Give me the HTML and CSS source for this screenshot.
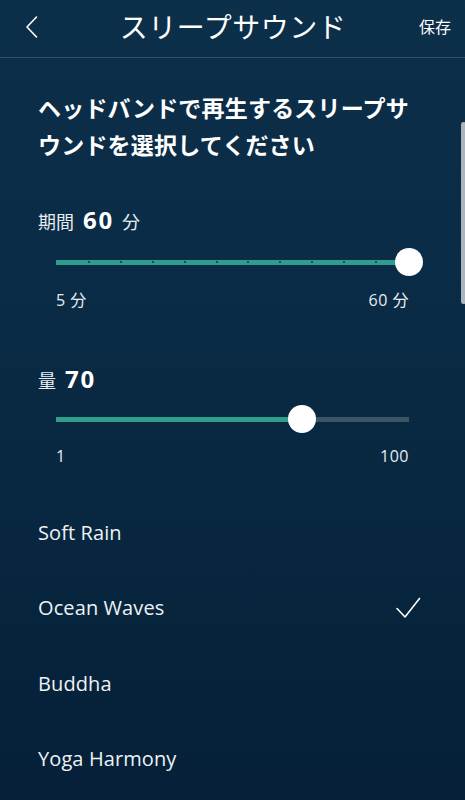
FILE: index.html
```html
<!DOCTYPE html>
<html lang="ja">
<head>
<meta charset="utf-8">
<title>スリープサウンド</title>
<link rel="stylesheet" href="styles.css">
</head>
<body>
<div class="screen">
  <header class="topbar">
    <span class="back">
      <svg width="14" height="24" viewBox="0 0 14 24"><path d="M11.5 2 L2 12 L11.5 22" fill="none" stroke="#ffffff" stroke-width="1.6" stroke-linecap="round" stroke-linejoin="round"/></svg>
    </span>
    <h1 class="title">スリープサウンド</h1>
    <span class="save">保存</span>
  </header>

  <main class="content">
    <p class="lead">ヘッドバンドで再生するスリープサウンドを選択してください</p>

    <section class="setting duration">
      <div class="label"><span class="jp">期間</span><b class="num">60</b><span class="jp unit">分</span></div>
      <div class="slider">
        <div class="track"><div class="fill" style="width:100%"></div>
          <div class="ticks"><i></i><i></i><i></i><i></i><i></i><i></i><i></i><i></i><i></i><i></i><i></i><i></i></div>
        </div>
        <div class="thumb" style="left:100%"></div>
      </div>
      <div class="range"><span>5 分</span><span>60 分</span></div>
    </section>

    <section class="setting volume">
      <div class="label"><span class="jp">量</span><b class="num">70</b></div>
      <div class="slider">
        <div class="track"><div class="fill" style="width:69.7%"></div></div>
        <div class="thumb" style="left:69.7%"></div>
      </div>
      <div class="range"><span>1</span><span>100</span></div>
    </section>

    <ul class="sounds">
      <li>Soft Rain</li>
      <li class="selected">Ocean Waves
        <svg class="check" width="26" height="24" viewBox="0 0 26 24"><path d="M2 12.5 L10 21 L24.5 2.5" fill="none" stroke="#ffffff" stroke-width="1.6" stroke-linecap="round" stroke-linejoin="round"/></svg>
      </li>
      <li>Buddha</li>
      <li>Yoga Harmony</li>
    </ul>
  </main>

  <div class="scrollbar"></div>
</div>
</body>
</html>
```
FILE: styles.css
```css
* { box-sizing: border-box; }
html, body { margin: 0; padding: 0; }
body {
  width: 465px;
  height: 800px;
  overflow: hidden;
  background: #06213a;
  font-family: "Open Sans", "Noto Sans CJK JP", sans-serif;
  color: #ffffff;
}
.screen {
  position: relative;
  width: 465px;
  height: 800px;
  background: linear-gradient(180deg, #0c2f4a 0%, #0a2b45 40%, #052038 100%);
}
.topbar {
  height: 58px;
  display: flex;
  align-items: center;
  justify-content: space-between;
  padding: 0 14px 0 25px;
  border-bottom: 1px solid #33536a;
}
.back { display: flex; width: 40px; padding-bottom: 4px; }
.title {
  margin: 0;
  font-family: "Noto Sans CJK JP", sans-serif;
  font-weight: 400;
  font-size: 28px;
  letter-spacing: 0.5px;
  padding-bottom: 6px;
  padding-right: 18px;
}
.save {
  font-family: "Noto Sans CJK JP", sans-serif;
  font-size: 16px;
  padding-bottom: 6px;
}
.content { padding: 0 56px 0 38px; }
.lead {
  margin: 31px 0 0 0;
  font-family: "Noto Sans CJK JP", sans-serif;
  font-weight: 700;
  font-size: 23px;
  line-height: 37px;
  letter-spacing: 0.2px;
  width: 382px;
}
.duration { margin-top: 40px; }
.volume { margin-top: 51px; }
.label {
  display: flex;
  align-items: baseline;
  height: 30px;
}
.label .jp {
  font-family: "Noto Sans CJK JP", sans-serif;
  font-size: 18px;
  color: #e8edf1;
}
.label .num {
  font-family: "Open Sans", sans-serif;
  font-weight: 700;
  font-size: 24px;
  margin-left: 9px;
  letter-spacing: 1.8px;
}
.label .unit { margin-left: 8px; }
.slider {
  position: relative;
  margin: 15px 0 0 18px;
  width: 353px;
  height: 28px;
  display: flex;
  align-items: center;
}
.volume .slider { margin-top: 13px; }
.track {
  position: relative;
  width: 100%;
  height: 5px;
  background: #3b5466;
}
.fill {
  height: 100%;
  background: #2f9d8e;
}
.ticks {
  position: absolute;
  inset: 0;
  display: flex;
  justify-content: space-between;
  align-items: center;
}
.ticks i {
  width: 2px;
  height: 2px;
  border-radius: 1px;
  background: #0f3347;
}
.ticks i:first-child, .ticks i:last-child { visibility: hidden; }
.thumb {
  position: absolute;
  top: 0;
  width: 28px;
  height: 28px;
  margin-left: -14px;
  border-radius: 50%;
  background: #ffffff;
}
.range {
  display: flex;
  justify-content: space-between;
  margin: 11px 0 0 18px;
  width: 353px;
  font-family: "Open Sans", "Noto Sans CJK JP", sans-serif;
  font-size: 16px;
  letter-spacing: 0.5px;
  color: #e8edf1;
}
.volume .range { margin-top: 12px; }
.sounds {
  list-style: none;
  margin: 29px 0 0 0;
  padding: 0;
}
.sounds li {
  position: relative;
  height: 75.3px;
  display: flex;
  align-items: center;
  justify-content: space-between;
  font-size: 20px;
  letter-spacing: 0.1px;
  color: #eef2f5;
  padding-bottom: 2px;
}
.sounds li .check { margin-right: -12px; }
.scrollbar {
  position: absolute;
  left: 461px;
  top: 122px;
  width: 5px;
  height: 182px;
  border-radius: 3px;
  background: #adb5bc;
}
```
